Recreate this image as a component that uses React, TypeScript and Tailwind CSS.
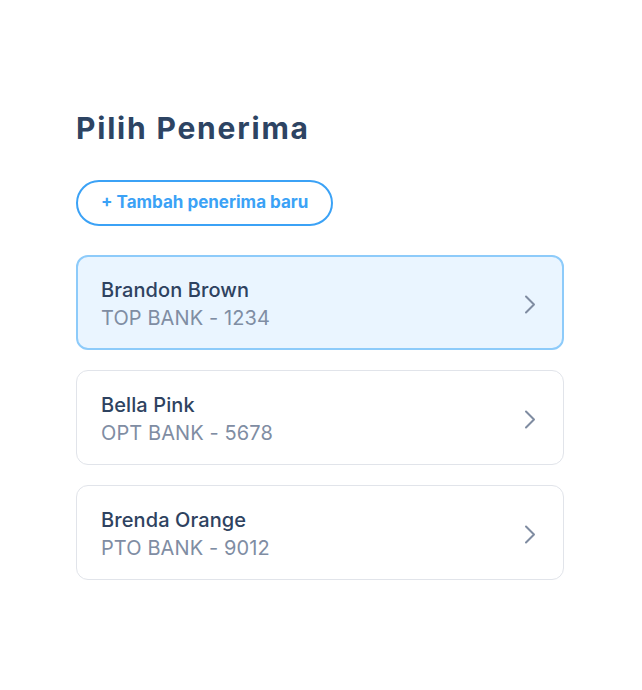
import React from "react";

type Recipient = { name: string; bank: string; selected?: boolean };

const recipients: Recipient[] = [
  { name: "Brandon Brown", bank: "TOP BANK - 1234", selected: true },
  { name: "Bella Pink", bank: "OPT BANK - 5678" },
  { name: "Brenda Orange", bank: "PTO BANK - 9012" },
];

function Chevron() {
  return (
    <svg width="12" height="21" viewBox="0 0 12 21" fill="none" className="mt-[3px]">
      <path d="M2 2.5 L10 10.5 L2 18.5" stroke="#7f8ca1" strokeWidth="2" strokeLinecap="round" strokeLinejoin="round" />
    </svg>
  );
}

export default function App() {
  return (
    <div className="w-[642px] h-[690px] bg-white" style={{ fontFamily: "Inter, 'Open Sans', sans-serif" }}>
      <div className="pt-[106px] pl-[76px] w-[564px]">
        <h1 className="text-[30px] leading-[44px] font-bold text-[#2d4463] tracking-[1.8px]">Pilih Penerima</h1>
        <button className="mt-[30px] h-[46px] px-[23px] rounded-full border-2 border-[#3ba2f6] text-[#3ba2f6] text-[17px] font-bold">
          + Tambah penerima baru
        </button>
        <div className="mt-[29px] flex flex-col gap-[20px]">
          {recipients.map((r) => (
            <div
              key={r.name}
              className={
                r.selected
                  ? "h-[95px] rounded-[12px] border-2 border-[#8dcbfa] bg-[#eaf5ff] flex items-center justify-between pl-[23px] pr-[26px]"
                  : "h-[95px] rounded-[12px] border border-[#e1e4ea] bg-white flex items-center justify-between pl-[24px] pr-[27px]"
              }
            >
              <div className="flex flex-col mt-[3px]">
                <span className="text-[20px] leading-[28px] text-[#2e4260] font-medium tracking-[0.1px]">{r.name}</span>
                <span className="text-[20px] leading-[28px] text-[#7f8da3] tracking-[0.1px]">{r.bank}</span>
              </div>
              <Chevron />
            </div>
          ))}
        </div>
      </div>
    </div>
  );
}
